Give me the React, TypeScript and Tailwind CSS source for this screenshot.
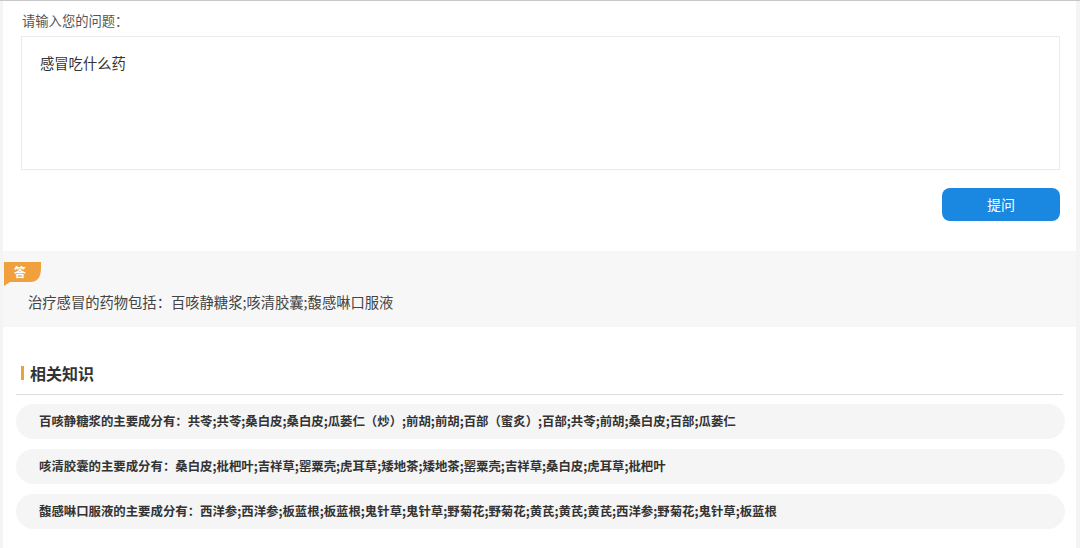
import React from "react";

const items = [
  "百咳静糖浆的主要成分有：共苓;共苓;桑白皮;桑白皮;瓜蒌仁（炒）;前胡;前胡;百部（蜜炙）;百部;共苓;前胡;桑白皮;百部;瓜蒌仁",
  "咳清胶囊的主要成分有：桑白皮;枇杷叶;吉祥草;罂粟壳;虎耳草;矮地茶;矮地茶;罂粟壳;吉祥草;桑白皮;虎耳草;枇杷叶",
  "馥感啉口服液的主要成分有：西洋参;西洋参;板蓝根;板蓝根;鬼针草;鬼针草;野菊花;野菊花;黄芪;黄芪;黄芪;西洋参;野菊花;鬼针草;板蓝根",
];

function AnswerBadge() {
  return (
    <svg width="37" height="24" viewBox="0 0 37 24" className="block">
      <path d="M0 0 H37 V6 Q37 20 26 20 H6 L0 24 Z" fill="#f0a03c" />
      <text
        x="16"
        y="14.5"
        textAnchor="middle"
        fontSize="12"
        fontWeight="700"
        fill="#fff"
        fontFamily="'Noto Sans CJK SC', sans-serif"
      >
        答
      </text>
    </svg>
  );
}

export default function App() {
  return (
    <div
      className="h-[548px] w-[1080px] overflow-hidden border-t border-[#c8c8c8] bg-[#f4f4f4] px-[3px]"
      style={{ fontFamily: "'Noto Sans CJK SC', 'Noto Sans', sans-serif" }}
    >
      <div className="h-full w-[1073px] bg-white">
        {/* question */}
        <div className="pl-[18px] pr-[16px] pt-[10px]">
          <p className="pl-[1px] text-[13.3px] leading-[20px] text-[#555]">请输入您的问题：</p>
          <div className="mt-[5px] h-[134px] w-[1039px] border border-[#ebebeb] px-[18px] pt-[14px] text-[14.3px] leading-[24px] text-[#333]">
            感冒吃什么药
          </div>
          <div className="mt-[18px] flex justify-end">
            <button className="h-[33px] w-[118px] rounded-[8px] bg-[#1a88e0] text-[14px] text-white">
              提问
            </button>
          </div>
        </div>

        {/* answer */}
        <div className="mt-[30px] h-[76px] bg-[#f7f7f7] pt-[11px]">
          <div className="pl-[1px]">
            <AnswerBadge />
          </div>
          <p className="mt-[5px] pl-[25px] text-[14.3px] leading-[22px] text-[#444]">
            治疗感冒的药物包括：百咳静糖浆;咳清胶囊;馥感啉口服液
          </p>
        </div>

        {/* related */}
        <div className="px-[13px] pt-[34px]">
          <div className="flex items-center border-b border-[#dedede] pb-[9px] pl-[5px]">
            <span className="mr-[6px] h-[14px] w-[3px] bg-[#e8a33a]" />
            <span className="text-[16px] font-bold leading-[24px] text-[#333]">相关知识</span>
          </div>
          <div className="mt-[9px] flex w-[1049px] flex-col gap-[10px]">
            {items.map((t) => (
              <div
                key={t}
                className="flex h-[35px] items-center rounded-full bg-[#f5f5f5] pl-[23px] text-[12.4px] font-semibold text-[#333]"
              >
                {t}
              </div>
            ))}
          </div>
        </div>
      </div>
    </div>
  );
}
